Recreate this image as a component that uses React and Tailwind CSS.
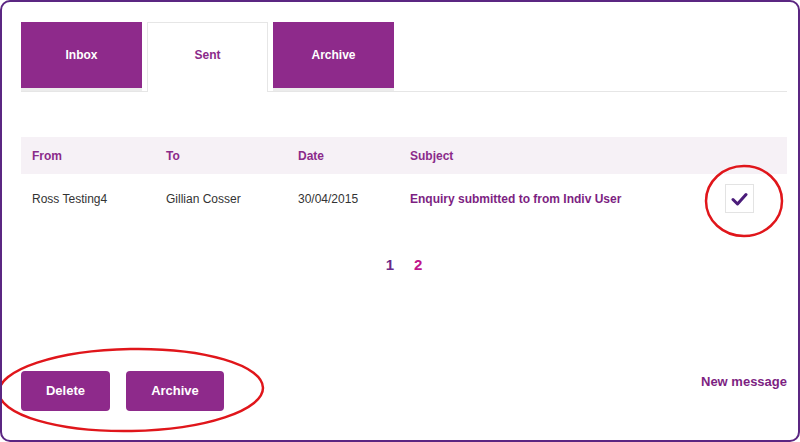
import React from 'react'

const Tab = ({ label, active }) =>
  active ? (
    <div className="w-[121px] h-[70px] -mb-px pb-[5px] bg-white border border-b-0 border-[#e6e6e6] flex items-center justify-center text-[12px] font-bold text-[#8b2a8a]">
      {label}
    </div>
  ) : (
    <div className="w-[121px] h-[66px] bg-[#8e2a8b] shadow-[0_3px_0_#ececec] flex items-center justify-center text-[12px] font-bold text-white">
      {label}
    </div>
  )

export default function App() {
  return (
    <div
      className="relative w-[800px] h-[442px] bg-white border-2 border-[#5b2682] rounded-[10px] overflow-hidden"
      style={{ fontFamily: '"Liberation Sans", Arial, sans-serif' }}
    >
      <div className="pl-[19px] pr-[11px] pt-[20px]">
        {/* Tabs */}
        <div className="flex items-start gap-[5px] border-b border-[#e6e6e6]">
          <Tab label="Inbox" />
          <Tab label="Sent" active />
          <Tab label="Archive" />
        </div>

        {/* Table */}
        <div className="mt-[45px]">
          <div className="flex items-center h-[37px] bg-[#f6f1f6] text-[12px] font-bold text-[#8b2a8a]">
            <div className="w-[145px] pl-[11px]">From</div>
            <div className="w-[132px]">To</div>
            <div className="w-[112px]">Date</div>
            <div className="flex-1">Subject</div>
          </div>
          <div className="flex items-center h-[49px] text-[12px] text-[#333]">
            <div className="w-[145px] pl-[11px]">Ross Testing4</div>
            <div className="w-[132px]">Gillian Cosser</div>
            <div className="w-[112px]">30/04/2015</div>
            <div className="flex-1 font-bold text-[#7d1f82]">Enquiry submitted to from Indiv User</div>
            <div className="w-[29px] h-[29px] mr-[33px] border border-[#e3e3e3] flex items-center justify-center">
              <svg width="17" height="14" viewBox="0 0 17 14">
                <path d="M2 7.5 L6.5 12 L15 2.5" fill="none" stroke="#4b1c7a" strokeWidth="3" strokeLinecap="round" strokeLinejoin="round" />
              </svg>
            </div>
          </div>
        </div>

        {/* Pagination */}
        <div className="mt-[31px] flex justify-center gap-[20px] text-[15px] font-bold">
          <span className="text-[#6a2a8a]">1</span>
          <span className="text-[#c0148c]">2</span>
        </div>

        {/* Actions */}
        <div className="mt-[94px] flex items-center">
          <button className="w-[89px] h-[40px] rounded-[4px] bg-[#8e2a8b] text-white text-[13px] font-bold">Delete</button>
          <button className="ml-[16px] w-[98px] h-[40px] rounded-[4px] bg-[#8e2a8b] text-white text-[13px] font-bold">Archive</button>
          <div className="ml-auto -mt-[18px] text-[13px] font-bold text-[#7d1f82]">New message</div>
        </div>
      </div>

      {/* annotation overlays */}
      <svg className="absolute left-0 top-0 pointer-events-none" width="800" height="442">
        <ellipse cx="742" cy="199" rx="38" ry="35" fill="none" stroke="#e0161b" strokeWidth="2.5" />
        <ellipse cx="129" cy="388" rx="132" ry="41" fill="none" stroke="#e0161b" strokeWidth="2.5" transform="rotate(-1 129 388)" />
      </svg>
    </div>
  )
}
